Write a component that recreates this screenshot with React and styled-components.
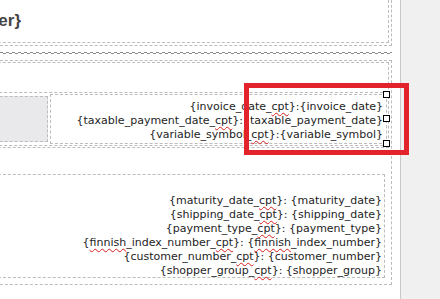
import React from 'react';
import styled, { createGlobalStyle } from 'styled-components';

const GlobalStyle = createGlobalStyle`
  html, body {
    margin: 0;
    padding: 0;
    background: #fff;
    overflow: hidden;
  }
  body {
    font-family: "DejaVu Sans", Verdana, sans-serif;
  }
`;

const dash = '1px dashed #bcbcbc';

const Page = styled.div`
  position: relative;
  display: flex;
  height: 299px;
`;

const Editor = styled.div`
  width: 401px;
  flex: 0 0 401px;
  box-sizing: border-box;
  border-right: 1px solid #c9c9c9;
  overflow: hidden;
`;

const Sidebar = styled.div`
  flex: 1;
  background: #f0f0f0;
`;

const Doc = styled.div`
  margin-left: -60px;
  width: 452px;
  display: flex;
  flex-direction: column;
`;

const Frame = styled.div`
  box-sizing: border-box;
  border: ${dash};
  border-top: ${p => (p.$open ? 'none' : dash)};
  padding: ${p => (p.$open ? '0 2px 2px' : '1px 2px 1px')};
`;

const Box = styled.div`
  box-sizing: border-box;
  border: ${dash};
  border-top: ${p => (p.$open ? 'none' : dash)};
  height: ${p => p.$h}px;
  margin: ${p => p.$m || '0'};
  padding: ${p => p.$pad || '0'};
`;

const HeadingClip = styled.div`
  width: 77px;
  display: flex;
  justify-content: flex-end;
  overflow: hidden;
  white-space: nowrap;
`;

const Heading = styled.span`
  font-family: "Liberation Sans", Arial, sans-serif;
  font-size: 17px;
  font-weight: 700;
  color: #444;
`;

const Separator = styled.div`
  margin: 6px 0;
  height: 2px;
  background:
    repeating-linear-gradient(90deg, #8c8c8c 0 3px, transparent 3px 6px) top / 100% 1px no-repeat,
    repeating-linear-gradient(90deg, transparent 0 3px, #8c8c8c 3px 6px) bottom / 100% 1px no-repeat;
`;

const Table = styled.div`
  display: flex;
  gap: 2px;
  box-sizing: border-box;
  height: 54px;
  border-top: ${dash};
  border-bottom: ${dash};
  padding: 1px 1px 1px 0;
`;

const GrayCell = styled.div`
  flex: 0 0 104px;
  box-sizing: border-box;
  margin: 2px 0;
  background: #e9e9eb;
  border: ${dash};
`;

const TextCell = styled.div`
  position: relative;
  flex: 1;
  box-sizing: border-box;
  border: ${dash};
  padding: 5px 3px 0 0;
`;

const Lines = styled.div`
  font-size: 11px;
  line-height: 14px;
  color: #1e1e1e;
  text-align: right;
  white-space: nowrap;
`;

const Typo = styled.span`
  text-decoration: underline wavy #d42020;
  text-decoration-thickness: 1px;
  text-underline-offset: 2px;
  text-decoration-skip-ink: none;
`;

const Handle = styled.div`
  position: absolute;
  right: -4px;
  width: 7px;
  height: 7px;
  box-sizing: border-box;
  border: 1px solid #000;
  background: #fff;
  top: ${p => (p.$at === 'top' ? '-4px' : p.$at === 'mid' ? 'calc(50% - 4px)' : 'auto')};
  bottom: ${p => (p.$at === 'bottom' ? '-4px' : 'auto')};
`;

const Highlight = styled.div`
  position: absolute;
  left: 244px;
  top: 83px;
  width: 165px;
  height: 72px;
  box-sizing: border-box;
  border: 5px solid #e3232b;
  pointer-events: none;
`;

function Field({ name, sep = ': ' }) {
  const parts = name.split('_');
  const render = words =>
    words.map((w, i) => (
      <React.Fragment key={i}>
        {i > 0 && '_'}
        {w === 'cpt' || w === 'finnish' ? <Typo>{w}</Typo> : w}
      </React.Fragment>
    ));
  return (
    <div>
      {'{'}
      {render([...parts, 'cpt'])}
      {'}'}
      {sep}
      {'{'}
      {render(parts)}
      {'}'}
    </div>
  );
}

const headerFields = ['invoice_date', 'taxable_payment_date', 'variable_symbol'];
const detailFields = [
  'maturity_date',
  'shipping_date',
  'payment_type',
  'finnish_index_number',
  'customer_number',
  'shopper_group',
];

export default function App() {
  return (
    <>
      <GlobalStyle />
      <Page>
        <Editor>
          <Doc>
            <Frame $open>
              <Box $open $h={43} $pad="11px 0 0">
                <HeadingClip>
                  <Heading>{'{order_number}'}</Heading>
                </HeadingClip>
              </Box>
            </Frame>
            <Separator />
            <Frame>
              <Box $h={86} $pad="29px 0 0">
                <Table>
                  <GrayCell />
                  <TextCell>
                    <Lines>
                      {headerFields.map(f => (
                        <Field key={f} name={f} sep=":" />
                      ))}
                    </Lines>
                    <Handle $at="top" />
                    <Handle $at="mid" />
                    <Handle $at="bottom" />
                  </TextCell>
                </Table>
              </Box>
              <Box $h={104} $m="26px 4px 5px 0" $pad="19px 2px 0 0">
                <Lines>
                  {detailFields.map(f => (
                    <Field key={f} name={f} />
                  ))}
                </Lines>
              </Box>
            </Frame>
          </Doc>
        </Editor>
        <Sidebar />
        <Highlight />
      </Page>
    </>
  );
}
